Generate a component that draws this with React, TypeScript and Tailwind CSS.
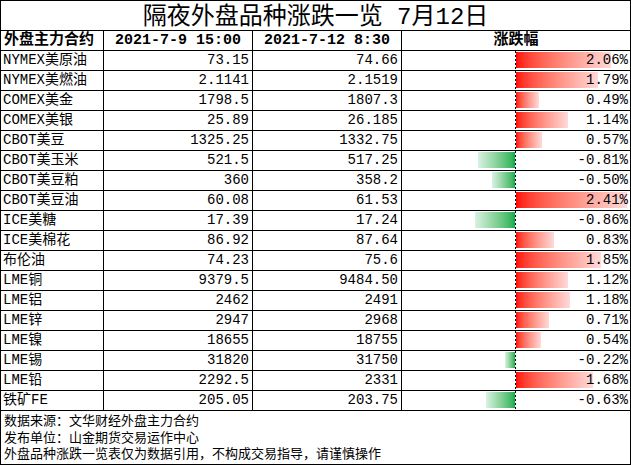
import React from "react";

type Row = { name: string; prev: string; last: string; pct: number };

const rows: Row[] = [
  { name: "NYMEX美原油", prev: "73.15", last: "74.66", pct: 2.06 },
  { name: "NYMEX美燃油", prev: "2.1141", last: "2.1519", pct: 1.79 },
  { name: "COMEX美金", prev: "1798.5", last: "1807.3", pct: 0.49 },
  { name: "COMEX美银", prev: "25.89", last: "26.185", pct: 1.14 },
  { name: "CBOT美豆", prev: "1325.25", last: "1332.75", pct: 0.57 },
  { name: "CBOT美玉米", prev: "521.5", last: "517.25", pct: -0.81 },
  { name: "CBOT美豆粕", prev: "360", last: "358.2", pct: -0.5 },
  { name: "CBOT美豆油", prev: "60.08", last: "61.53", pct: 2.41 },
  { name: "ICE美糖", prev: "17.39", last: "17.24", pct: -0.86 },
  { name: "ICE美棉花", prev: "86.92", last: "87.64", pct: 0.83 },
  { name: "布伦油", prev: "74.23", last: "75.6", pct: 1.85 },
  { name: "LME铜", prev: "9379.5", last: "9484.50", pct: 1.12 },
  { name: "LME铝", prev: "2462", last: "2491", pct: 1.18 },
  { name: "LME锌", prev: "2947", last: "2968", pct: 0.71 },
  { name: "LME镍", prev: "18655", last: "18755", pct: 0.54 },
  { name: "LME锡", prev: "31820", last: "31750", pct: -0.22 },
  { name: "LME铅", prev: "2292.5", last: "2331", pct: 1.68 },
  { name: "铁矿FE", prev: "205.05", last: "203.75", pct: -0.63 },
];

// px per 1% on the data bars
const SCALE = 46;

const cell = "border-r border-b border-black h-[20px] leading-[19px] overflow-hidden whitespace-nowrap";

const App = () => {
  return (
    <div
      className="w-[631px] h-[465px] bg-white text-black text-[14px] overflow-hidden"
      style={{ fontFamily: '"Liberation Mono", "Noto Sans CJK SC", monospace' }}
    >
      <div className="grid grid-cols-[103px_149px_149px_229px] border-l border-t border-black">
        <div className="col-span-4 border-r border-b border-black h-[30px] flex items-center justify-center pt-[4px] text-[24px] leading-none">
          隔夜外盘品种涨跌一览 7月12日
        </div>

        <div className={`${cell} pl-[3px] font-bold text-[15px]`}>外盘主力合约</div>
        <div className={`${cell} text-center font-bold text-[15px]`}>2021-7-9 15:00</div>
        <div className={`${cell} text-center font-bold text-[15px]`}>2021-7-12 8:30</div>
        <div className={`${cell} text-center font-bold text-[15px]`}>涨跌幅</div>

        {rows.map((r) => (
          <React.Fragment key={r.name}>
            <div className={`${cell} pl-[2px]`}>{r.name}</div>
            <div className={`${cell} text-right pr-[3px]`}>{r.prev}</div>
            <div className={`${cell} text-right pr-[3px]`}>{r.last}</div>
            <div className={`${cell} relative flex`}>
              <div className="w-[113px] flex justify-end items-start pt-[1px]">
                {r.pct < 0 && (
                  <div
                    className="h-[16px] bg-linear-to-r from-[#d9f2e2] to-[#00b050]"
                    style={{ width: Math.round(-r.pct * SCALE) }}
                  />
                )}
              </div>
              <div className="w-px h-full bg-[repeating-linear-gradient(to_bottom,#000_0_2px,transparent_2px_4px)]" />
              <div className="flex-1 flex items-start pt-[1px]">
                {r.pct > 0 && (
                  <div
                    className="h-[16px] bg-linear-to-r from-[#ff0000] to-[#ffd9d9]"
                    style={{ width: Math.round(r.pct * SCALE) }}
                  />
                )}
              </div>
              <span className="absolute right-[2px] top-0">{r.pct.toFixed(2)}%</span>
            </div>
          </React.Fragment>
        ))}

        <div className="col-span-4 border-r border-b border-black h-[54px] pl-[3px] pt-[3px] text-[13px] leading-[16.5px]">
          <div>数据来源：文华财经外盘主力合约</div>
          <div>发布单位：山金期货交易运作中心</div>
          <div>外盘品种涨跌一览表仅为数据引用，不构成交易指导，请谨慎操作</div>
        </div>
      </div>
    </div>
  );
};

export default App;
